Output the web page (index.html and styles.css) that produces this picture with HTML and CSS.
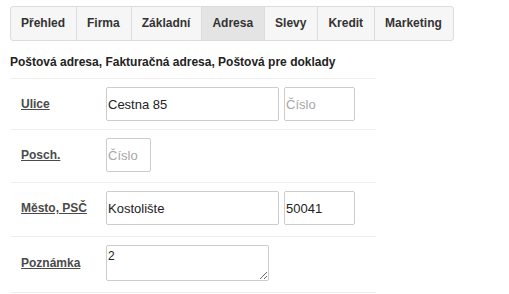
FILE: index.html
```html
<!DOCTYPE html>
<html lang="cs">
<head>
<meta charset="utf-8">
<link rel="stylesheet" href="styles.css">
</head>
<body>
<div class="page">
  <nav class="tabs">
    <span class="tab">Přehled</span>
    <span class="tab">Firma</span>
    <span class="tab">Základní</span>
    <span class="tab tab--active">Adresa</span>
    <span class="tab">Slevy</span>
    <span class="tab">Kredit</span>
    <span class="tab">Marketing</span>
  </nav>
  <h2 class="section-title">Poštová adresa, Fakturačná adresa, Poštová pre doklady</h2>
  <div class="form">
    <div class="row row--r1">
      <label class="label">Ulice</label>
      <div class="fields">
        <input class="input input--street" type="text" value="Cestna 85">
        <input class="input input--num" type="text" placeholder="Číslo">
      </div>
    </div>
    <div class="row row--r2">
      <label class="label">Posch.</label>
      <div class="fields">
        <input class="input input--small" type="text" placeholder="Číslo">
      </div>
    </div>
    <div class="row row--r3">
      <label class="label">Město, PSČ</label>
      <div class="fields">
        <input class="input input--street" type="text" value="Kostolište">
        <input class="input input--num" type="text" value="50041">
      </div>
    </div>
    <div class="row row--r4">
      <label class="label">Poznámka</label>
      <div class="fields">
        <textarea class="textarea">2</textarea>
      </div>
    </div>
  </div>
</div>
</body>
</html>
```

FILE: styles.css
```css
* { box-sizing: border-box; }
html, body { margin: 0; padding: 0; background: #fff; }
body {
  font-family: "Liberation Sans", Arial, sans-serif;
  color: #333;
}
.page {
  padding: 6px 0 0 10px;
}
.tabs {
  display: inline-flex;
  border: 1px solid #dcdcdc;
  border-radius: 3px;
  overflow: hidden;
  background: #f6f6f6;
}
.tab {
  display: block;
  height: 33px;
  line-height: 33px;
  padding: 0 11px 0 10px;
  font-size: 12px;
  font-weight: bold;
  color: #333;
  border-left: 1px solid #dcdcdc;
}
.tab:first-child { border-left: none; }
.tab--active { background: #e4e4e4; }
.section-title {
  margin: 13px 0 7px 0;
  font-size: 12px;
  line-height: 17px;
  font-weight: bold;
  color: #222;
}
.form {
  width: 366px;
  border-bottom: 1px solid #eeeeee;
}
.row {
  display: flex;
  align-items: center;
  border-top: 1px solid #eeeeee;
  padding: 8px 0 8px 0;
}
.row--r2 { padding-bottom: 10px; }
.row--r3 { padding-bottom: 11px; }
.row--r4 { padding-bottom: 11px; }
.label {
  width: 96px;
  padding-left: 11px;
  font-size: 12px;
  font-weight: bold;
  color: #4a4a4a;
  text-decoration: underline;
}
.fields {
  display: flex;
  gap: 5px;
}
.input {
  height: 34px;
  border: 1px solid #cccccc;
  border-radius: 2px;
  padding: 0 0 0 1px;
  margin: 0;
  font-family: "Liberation Sans", Arial, sans-serif;
  font-size: 13px;
  color: #222;
  background: #fff;
}
.input::placeholder { color: #a6a6a6; }
.input--street { width: 173px; }
.input--num { width: 71px; }
.input--small { width: 45px; }
.textarea {
  width: 163px;
  height: 36px;
  border: 1px solid #cccccc;
  border-radius: 2px;
  padding: 3px 1px;
  margin: 0;
  font-family: "Liberation Sans", Arial, sans-serif;
  font-size: 12px;
  color: #222;
  resize: both;
  display: block;
}
```
